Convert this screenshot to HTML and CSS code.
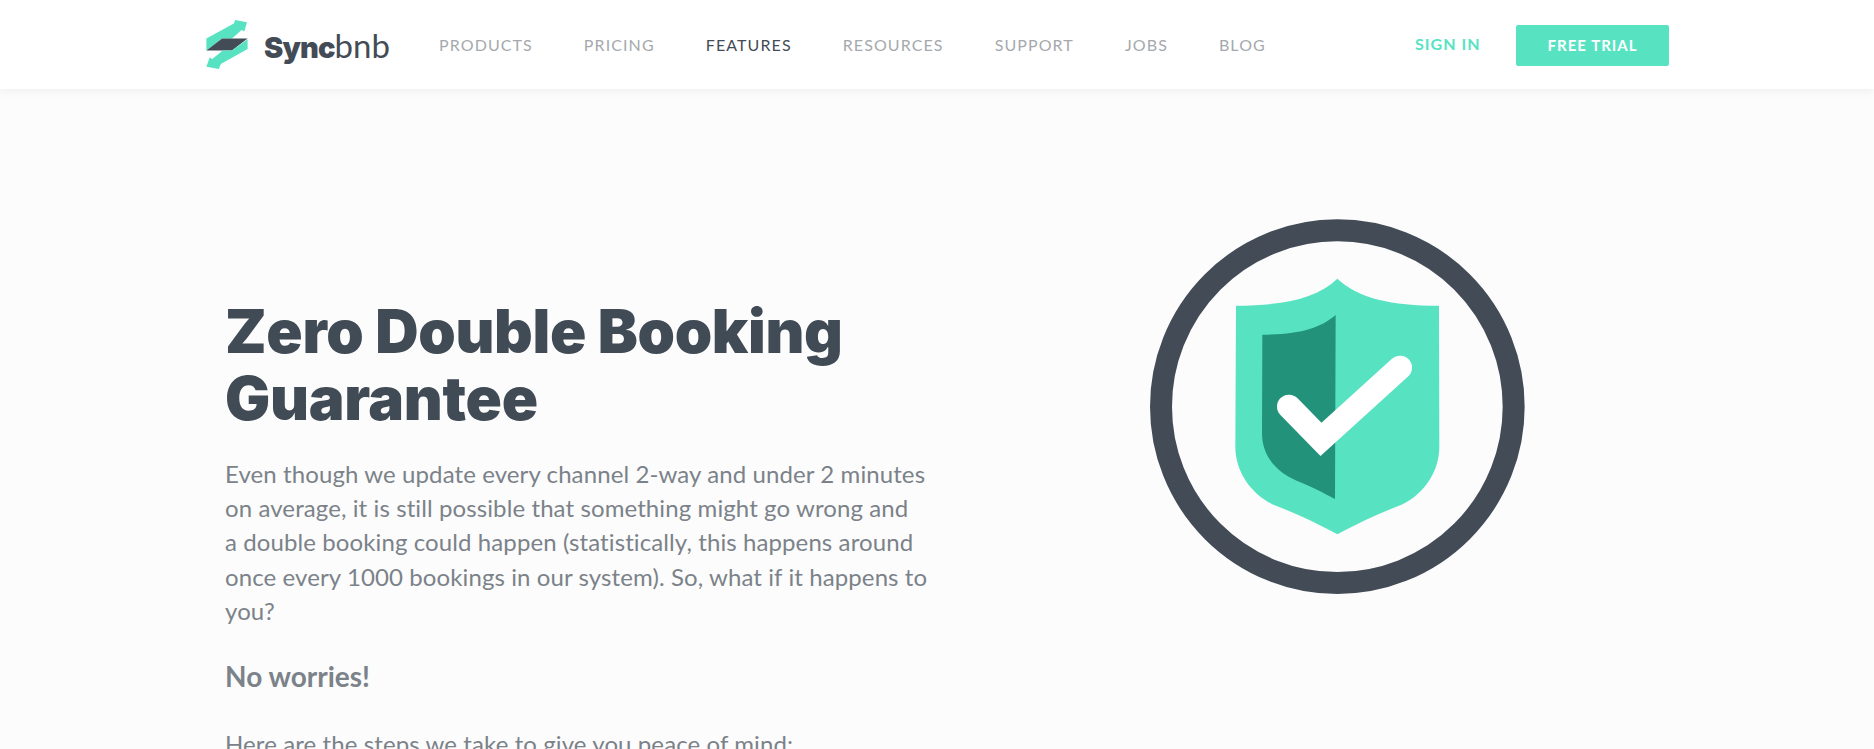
FILE: index.html
```html
<!DOCTYPE html>
<html lang="en">
<head>
<meta charset="utf-8">
<title>Syncbnb</title>
<link rel="stylesheet" href="styles.css">
</head>
<body>
<header class="topbar">
  <a class="brand" href="#">
    <svg class="brand-mark" viewBox="30 24 134 156" aria-hidden="true">
      <path class="mint" d="M34 120V84L118 38L122 27L158 34L150 62L142 58L112 84H82Z"/>
      <path class="slate" d="M34 120L82 84H160L112 120Z"/>
      <path class="mint" d="M160 86V116L78 162L72 177L34 170L44 142L52 146L84 120H112Z"/>
    </svg>
    <span class="brand-name"><b>Sync</b>bnb</span>
  </a>
  <nav class="menu">
    <a href="#">PRODUCTS</a>
    <a href="#">PRICING</a>
    <a class="current" href="#">FEATURES</a>
    <a href="#">RESOURCES</a>
    <a href="#">SUPPORT</a>
    <a href="#">JOBS</a>
    <a href="#">BLOG</a>
  </nav>
  <div class="actions">
    <a class="signin" href="#">SIGN IN</a>
    <a class="trial" href="#">FREE TRIAL</a>
  </div>
</header>
<main class="hero">
  <section class="copy">
    <h1>Zero Double Booking Guarantee</h1>
    <p>Even though we update every channel 2-way and under 2 minutes on average, it is still possible that something might go wrong and<br>a double booking could happen (statistically, this happens around once every 1000 bookings in our system). So, what if it happens to you?</p>
    <h3>No worries!</h3>
    <p>Here are the steps we take to give you peace of mind:</p>
  </section>
  <div class="badge">
    <svg viewBox="60 57 1125 1125" aria-hidden="true">
      <circle class="ring" cx="622" cy="620" r="529"/>
      <path class="mint" d="M622 236C560 295 460 317 318 317L316 740C316 820 370 890 440 918C510 945 570 975 622 1003C675 975 735 945 805 918C875 890 928 820 928 740L927 317C785 317 685 295 622 236Z"/>
      <path class="deep" d="M617 345C570 385 510 403 397 404L396 700C396 770 440 815 500 842C545 860 580 878 615 897Z"/>
      <path class="tick" d="M477 620L573 718L810 503"/>
    </svg>
  </div>
</main>
</body>
</html>
```
FILE: styles.css
```css
* { box-sizing: border-box; }
html, body { height: 100%; }
body {
  margin: 0;
  height: 749px;
  overflow: hidden;
  background: #fcfcfc;
  font-family: "Lato", "Liberation Sans", sans-serif;
  color: #7b8289;
}
a { text-decoration: none; color: inherit; }
.mint { fill: #57e3c2; }
.slate { fill: #434c56; }
.deep { fill: #22937a; }
.ring { fill: none; stroke: #434c56; stroke-width: 66; }
.tick { fill: none; stroke: #fff; stroke-width: 72; stroke-linecap: round; stroke-linejoin: miter; }

.topbar {
  display: flex;
  align-items: center;
  height: 89px;
  padding: 0 205px;
  background: #fff;
  box-shadow: 0 1px 10px rgba(0, 0, 0, .07);
  position: relative;
}
.brand { display: flex; align-items: center; gap: 15px; width: 234px; }
.brand-mark { flex: none; width: 44px; height: 51px; }
.brand-name { font-size: 33px; color: #434c56; white-space: nowrap; }
.brand-name b { font-family: "Inter", sans-serif; font-size: 29px; font-weight: 900; letter-spacing: -.9px; }
.menu { display: flex; gap: 51px; font-size: 16px; letter-spacing: 1.1px; color: #a5a9ad; }
.menu .current { color: #434c56; }
.actions { display: flex; align-items: center; gap: 35.5px; margin-left: auto; font-weight: 700; letter-spacing: 1px; }
.signin { font-size: 16px; margin-bottom: 2px; color: #57e3c2; }
.trial {
  display: flex;
  align-items: center;
  justify-content: center;
  width: 153px;
  height: 41px;
  margin-top: 1px;
  border-radius: 2px;
  background: #57e3c2;
  color: #fff;
  font-size: 15px;
}

.hero { display: flex; padding-left: 225px; }
.copy { width: 720px; padding-top: 209px; }
h1 {
  margin: 0 0 25px;
  font-family: "Inter", sans-serif;
  font-size: 60px;
  line-height: 67px;
  font-weight: 900;
  letter-spacing: -.3px;
  color: #414b55;
  max-width: 680px;
}
.copy p { margin: 0; font-size: 24px; line-height: 34.2px; letter-spacing: .1px; max-width: 710px; }
h3 { margin: 31px 0 34px; font-size: 28px; line-height: 34px; font-weight: 700; }
.badge { width: 375px; height: 375px; margin: 130px 0 0 205px; }
.badge svg { display: block; width: 100%; height: 100%; }
```
